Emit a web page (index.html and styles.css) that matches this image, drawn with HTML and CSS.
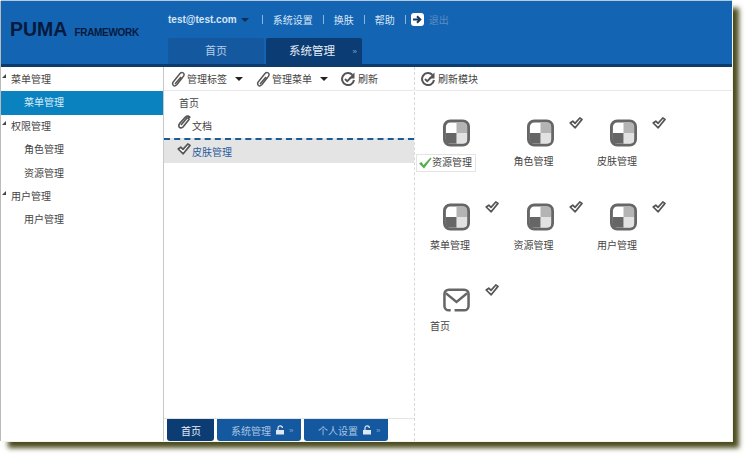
FILE: index.html
```html
<!DOCTYPE html>
<html lang="en">
<head>
    <meta charset="UTF-8">
    <title>PUMA Framework</title>
    <link rel="stylesheet" href="styles.css">
</head>
<body>
    <svg class="defs" width="0" height="0">
        <defs>
            <symbol id="check" viewBox="0 0 14 12">
                <path d="M1.200 6 L3.800 4.200 L6 6.400 L10.800 1 L13 2.400 L6.200 10.800 Z" fill="#fff" stroke="#555" stroke-width="1.700" stroke-linejoin="round"/>
            </symbol>
            <symbol id="clip" viewBox="0 0 14 16">
                <path d="M2.500 14.500 C1 13 1.500 11.500 3 10 L9 2.500 C10.500 1 12.500 1.500 13 3 C13.500 4.500 12.500 5.500 11.500 6.500 L6 13.500 C4.500 15 3.500 15.500 2.500 14.500 Z M4 13 L10 6" fill="none" stroke="#555" stroke-width="1.500"/>
            </symbol>
            <symbol id="refresh" viewBox="0 0 14 14">
                <path d="M11.500 3 A6 6 0 1 0 13 8" fill="none" stroke="#555" stroke-width="2"/>
                <path d="M13.500 .5 V6.500 H7.500 Z" fill="#555"/>
                <path d="M4 7 L6.200 9.200 L10 5.500" fill="none" stroke="#555" stroke-width="1.800"/>
            </symbol>
            <symbol id="module" viewBox="0 0 28 28">
                <rect x="1.500" y="1.500" width="25" height="25" rx="6" fill="#fff" stroke="#666" stroke-width="3"/>
                <path d="M14 3 H21 A4 4 0 0 1 25 7 V14 H14 Z" fill="#b4b4b4"/>
                <path d="M14 14 H25 V21 A4 4 0 0 1 21 25 H14 Z" fill="#e2e2e2"/>
                <path d="M3 14 H14 V25 H7 A4 4 0 0 1 3 21 Z" fill="#666"/>
            </symbol>
            <symbol id="mail" viewBox="0 0 28 24">
                <path d="M8 22.700 H6 A4.500 4.500 0 0 1 1.500 18.200 V5.800 A4.500 4.500 0 0 1 6 1.300 H22 A4.500 4.500 0 0 1 26.500 5.800 V18.200 A4.500 4.500 0 0 1 22 22.700 H12" fill="none" stroke="#666" stroke-width="2.600"/>
                <path d="M3 5 L14 14 L25 5" fill="none" stroke="#666" stroke-width="2.400"/>
            </symbol>
            <symbol id="lock" viewBox="0 0 10 10">
                <path d="M3 5 V3 A2.200 2.200 0 0 1 7.400 3" fill="none" stroke="#dfe8f2" stroke-width="1.200"/>
                <rect x="1" y="5" width="8" height="4.500" fill="#dfe8f2"/>
            </symbol>
        </defs>
    </svg>

    <div class="window">
        <header class="top">
            <div class="logo"><b>PUMA</b><span>FRAMEWORK</span></div>
            <div class="top-right">
                <nav class="links">
                    <a class="user">test@test.com</a><i class="caret light"></i>
                    <s class="first"></s><a>系统设置</a>
                    <s></s><a>换肤</a>
                    <s></s><a>帮助</a>
                    <s></s>
                    <svg class="exit" width="13" height="13" viewBox="0 0 13 13">
                        <rect width="13" height="13" rx="3" fill="#fff"/>
                        <path d="M2 6.500 H8 M6 3.200 L9.300 6.500 L6 9.800" fill="none" stroke="#1a3a5c" stroke-width="2"/>
                    </svg>
                    <a class="logout">退出</a>
                </nav>
                <div class="tabs">
                    <div class="tab">首页</div>
                    <div class="tab on">系统管理<em>»</em></div>
                </div>
            </div>
        </header>

        <div class="main">
            <aside class="side">
                <div class="group">菜单管理</div>
                <div class="leaf on">菜单管理</div>
                <div class="group">权限管理</div>
                <div class="leaf">角色管理</div>
                <div class="leaf">资源管理</div>
                <div class="group">用户管理</div>
                <div class="leaf">用户管理</div>
            </aside>

            <section class="mid">
                <div class="bar">
                    <svg class="ico pen" width="14" height="16"><use href="#clip"/></svg><span>管理标签</span><i class="caret"></i>
                    <svg class="ico pen" width="14" height="16"><use href="#clip"/></svg><span>管理菜单</span><i class="caret"></i>
                    <svg class="ico" width="14" height="14"><use href="#refresh"/></svg><span>刷新</span>
                </div>
                <div class="list">
                    <div class="item plain">首页</div>
                    <div class="item">
                        <svg class="paper" width="14" height="15" viewBox="0 0 14 15">
                            <path d="M4 10 L9.500 3.500 C10.500 2.500 12 3 12 4.500 L6 12 C4.500 13.500 2 13 1.800 11 C1.700 10 2.200 9 3 8 L8.500 2 C10 .5 12.500 .7 13 3" fill="none" stroke="#555" stroke-width="1.700"/>
                        </svg>
                        文档
                    </div>
                    <div class="item sel">
                        <svg width="14" height="12"><use href="#check"/></svg>
                        皮肤管理
                    </div>
                </div>
                <div class="dock">
                    <div class="dock-tab on">首页</div>
                    <div class="dock-tab">系统管理<svg width="10" height="10"><use href="#lock"/></svg><em>»</em></div>
                    <div class="dock-tab">个人设置<svg width="10" height="10"><use href="#lock"/></svg><em>»</em></div>
                </div>
            </section>

            <section class="right">
                <div class="bar">
                    <svg class="ico" width="14" height="14"><use href="#refresh"/></svg><span>刷新模块</span>
                </div>
                <div class="grid">
                    <div class="cell">
                        <svg class="big" width="27" height="28"><use href="#module"/></svg>
                        <div class="name picked">
                            <svg width="14" height="12" viewBox="0 0 14 12"><path d="M1 6.500 L3.500 5 L5.500 8 L12.500 .5 L13.500 1.500 L6 11.500 Z" fill="#55b04a"/></svg>
                            资源管理
                        </div>
                    </div>
                    <div class="cell">
                        <svg class="big" width="27" height="28"><use href="#module"/></svg>
                        <svg class="tick" width="14" height="12"><use href="#check"/></svg>
                        <div class="name">角色管理</div>
                    </div>
                    <div class="cell">
                        <svg class="big" width="27" height="28"><use href="#module"/></svg>
                        <svg class="tick" width="14" height="12"><use href="#check"/></svg>
                        <div class="name">皮肤管理</div>
                    </div>
                    <div class="cell">
                        <svg class="big" width="27" height="28"><use href="#module"/></svg>
                        <svg class="tick" width="14" height="12"><use href="#check"/></svg>
                        <div class="name">菜单管理</div>
                    </div>
                    <div class="cell">
                        <svg class="big" width="27" height="28"><use href="#module"/></svg>
                        <svg class="tick" width="14" height="12"><use href="#check"/></svg>
                        <div class="name">资源管理</div>
                    </div>
                    <div class="cell">
                        <svg class="big" width="27" height="28"><use href="#module"/></svg>
                        <svg class="tick" width="14" height="12"><use href="#check"/></svg>
                        <div class="name">用户管理</div>
                    </div>
                    <div class="cell">
                        <svg class="big mail" width="27" height="24"><use href="#mail"/></svg>
                        <svg class="tick" width="14" height="12"><use href="#check"/></svg>
                        <div class="name">首页</div>
                    </div>
                </div>
            </section>
        </div>
    </div>
</body>
</html>
```

FILE: styles.css
```css
html,
body {
    height: 100%;
}
body {
    margin: 0;
    background: #fff;
    font-family: "Liberation Sans", "Noto Sans CJK SC", sans-serif;
    font-size: 10px;
    color: #444;
    overflow: hidden;
}
.defs {
    display: block;
    height: 0;
}
.window {
    display: flex;
    flex-direction: column;
    width: 731px;
    height: 440px;
    margin: 1px 0 0 1px;
    background: #fff;
    box-shadow: 1px 1px 0 #f4f4ec, 7px 7px 5px #4c4c20, -1px 0 0 #bbb, 0 -1px 0 #b5c8dc;
}

/* header */
.top {
    display: flex;
    box-sizing: border-box;
    height: 66px;
    background: #1464b4;
    border-bottom: 3px solid #0b3c6c;
}
.logo {
    width: 167px;
    padding: 17px 0 0 9px;
    box-sizing: border-box;
    color: #061a3c;
}
.logo b {
    font-size: 19.5px;
}
.logo span {
    margin-left: 7px;
    font-size: 10px;
    letter-spacing: -0.3px;
    font-weight: bold;
}
.top-right {
    display: flex;
    flex-direction: column;
    flex: 1;
}
.links {
    display: flex;
    align-items: center;
    height: 37px;
    color: #d8e6f4;
}
.links .user {
    font-size: 10px;
    font-weight: bold;
}
.links s {
    width: 1px;
    height: 9px;
    margin: 0 10px;
    background: #8db4dc;
}
.links s.first {
    margin-left: 13px;
}
.links .exit {
    margin-left: -5px;
    margin-right: 5px;
}
.links .logout {
    color: #5a8cc0;
}
.caret {
    display: inline-block;
    width: 0;
    height: 0;
    margin: 0 13px 0 8px;
    border-left: 4px solid transparent;
    border-right: 4px solid transparent;
    border-top: 4px solid #222;
}
.caret.light {
    margin: 0 0 0 4px;
    border-top-color: #0b2c58;
}
.tabs {
    display: flex;
    gap: 2px;
    height: 26px;
}
.tab {
    position: relative;
    box-sizing: border-box;
    width: 96px;
    border-radius: 2px 2px 0 0;
    background: #14589f;
    color: #b5cde6;
    font-size: 11px;
    line-height: 27px;
    text-align: center;
}
.tab.on {
    padding-right: 4px;
    background: #0b3c74;
    color: #e6eef7;
    font-size: 11.5px;
}
.tab em {
    position: absolute;
    right: 5px;
    top: 0;
    font-style: normal;
    font-size: 8px;
    color: #7fa4cc;
}

/* columns */
.main {
    display: flex;
    flex: 1;
    min-height: 0;
}
.side {
    width: 162px;
    padding-top: 1px;
    border-right: 1px solid #c8c8c8;
}
.group,
.leaf {
    height: 23.4px;
    line-height: 24px;
    padding-left: 10px;
}
.leaf {
    padding-left: 23px;
}
.leaf.on {
    background: #0a82c0;
    color: #d8eefa;
}
.group {
    position: relative;
}
.group::before {
    content: "";
    position: absolute;
    left: 1px;
    top: 6px;
    border-left: 4px solid transparent;
    border-bottom: 4px solid #444;
}
.mid {
    display: flex;
    flex-direction: column;
    width: 250px;
    border-right: 1px dashed #d8d8d8;
}
.right {
    flex: 1;
}
.bar {
    display: flex;
    align-items: center;
    box-sizing: border-box;
    height: 24px;
    padding-left: 7px;
    border-bottom: 1px solid #e8e8e8;
}
.right .bar {
    padding-left: 6px;
}
.bar .ico {
    margin-right: 3px;
}
.bar .ico.pen {
    margin-right: 2px;
}
.list {
    flex: 1;
}
.item {
    display: flex;
    align-items: center;
    gap: 1px;
    height: 23px;
    padding-left: 13px;
}
.item.plain {
    padding-left: 15px;
}
.item svg {
    margin-top: -6px;
}
.item.sel {
    box-sizing: border-box;
    height: 25px;
    margin-top: 1px;
    border-top: 2px dashed #1c5c94;
    background: #e4e4e4;
    color: #2c5c9c;
}

/* bottom tabs */
.dock {
    display: flex;
    gap: 3px;
    height: 22px;
    padding-left: 3px;
    border-top: 1px solid #e4e4e4;
}
.dock-tab {
    display: flex;
    align-items: center;
    gap: 4px;
    box-sizing: border-box;
    width: 84px;
    padding-left: 14px;
    border-radius: 0 0 3px 3px;
    background: #14589f;
    color: #a9c4e0;
}
.dock-tab.on {
    width: 47px;
    background: #0b3c74;
    color: #e6eef7;
}
.dock-tab em {
    font-style: normal;
    font-size: 8px;
    color: #7fa4cc;
}

/* module grid */
.grid {
    display: grid;
    grid-template-columns: repeat(3, 83.5px);
    grid-auto-rows: 83.5px;
    padding-top: 28px;
}
.cell {
    position: relative;
}
.big {
    display: block;
    margin-left: 28px;
}
.big.mail {
    margin-top: 2px;
    margin-bottom: 2px;
}
.name {
    margin: 8.4px 0 0 15px;
    line-height: 14px;
}
.tick {
    position: absolute;
    left: 70px;
    top: -2px;
}
.name.picked {
    display: inline-flex;
    align-items: center;
    box-sizing: border-box;
    height: 18px;
    margin: 7px 0 0 1px;
    padding: 0 3px 0 1px;
    border: 1px solid #e4e4e4;
}
```
